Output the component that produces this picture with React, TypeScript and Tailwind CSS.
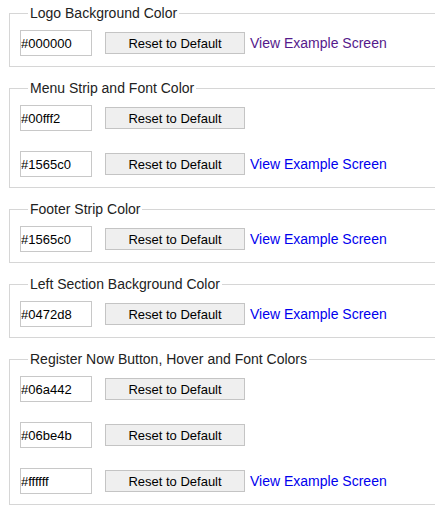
import { useState } from "react";

type Row = { value: string; link?: boolean; visited?: boolean };
type Section = { title: string; rows: Row[] };

const sections: Section[] = [
  { title: "Logo Background Color", rows: [{ value: "#000000", link: true, visited: true }] },
  { title: "Menu Strip and Font Color", rows: [{ value: "#00fff2" }, { value: "#1565c0", link: true }] },
  { title: "Footer Strip Color", rows: [{ value: "#1565c0", link: true }] },
  { title: "Left Section Background Color", rows: [{ value: "#0472d8", link: true }] },
  {
    title: "Register Now Button, Hover and Font Colors",
    rows: [{ value: "#06a442" }, { value: "#06be4b" }, { value: "#ffffff", link: true }],
  },
];

function ColorRow({ row }: { row: Row }) {
  const [value, setValue] = useState(row.value);
  return (
    <div className="flex items-center">
      <input
        value={value}
        onChange={(e) => setValue(e.target.value)}
        className="w-[72px] h-[26px] border border-[#c8c8c8] px-0 text-[13px] text-black outline-none bg-white"
      />
      <button
        type="button"
        onClick={() => setValue(row.value)}
        className="ml-[13px] w-[140px] h-[22px] border border-[#c4c4c4] bg-[#efefef] text-[13px] text-black leading-none"
      >
        Reset to Default
      </button>
      {row.link && (
        <a
          href="#"
          className={`ml-[5px] text-[14px] leading-[16px] ${row.visited ? "text-[#551a8b]" : "text-[#0000ee]"}`}
        >
          View Example Screen
        </a>
      )}
    </div>
  );
}

export default function App() {
  return (
    <div className="w-[435px] h-[512px] overflow-hidden bg-white font-['Liberation_Sans',Arial,sans-serif] pt-[5px]">
      {sections.map((s) => (
        <fieldset
          key={s.title}
          className="ml-[9px] mb-[13px] w-[450px] border border-[#d6d6d6] pl-[10px] pt-[9px] pb-[10px] min-w-0"
        >
          <legend className="ml-[8px] px-[2px] text-[14px] leading-[16px] text-[#222]">{s.title}</legend>
          <div className="flex flex-col gap-[20px]">
            {s.rows.map((r, i) => (
              <ColorRow key={i} row={r} />
            ))}
          </div>
        </fieldset>
      ))}
    </div>
  );
}
